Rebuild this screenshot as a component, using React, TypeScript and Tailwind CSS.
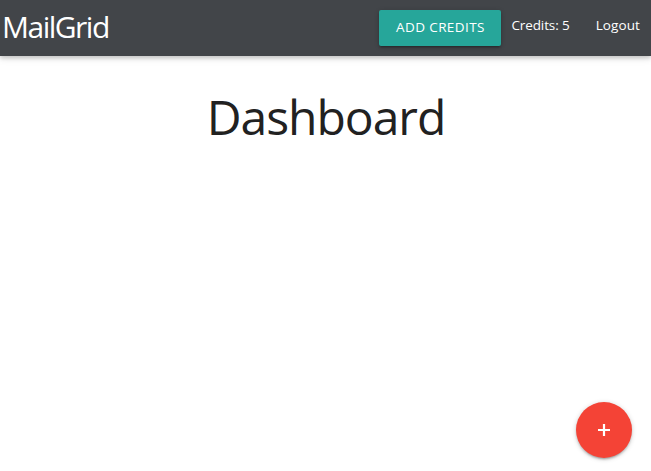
import React from "react"

function Navbar() {
  return (
    <nav className="relative z-10 flex h-[56px] items-center justify-between bg-[#424549] pl-[2px] pr-[11px] text-white shadow-[0_2px_4px_0_rgba(0,0,0,0.16),0_2px_8px_0_rgba(0,0,0,0.12)]">
      <a className="pb-[3px] text-[30px] leading-none tracking-[-1.5px]">MailGrid</a>
      <ul className="flex items-center">
        <li>
          <button className="h-[36px] w-[122px] rounded-[2px] bg-[#26a69a] pb-[1px] text-[13.5px] uppercase tracking-[0.4px] text-white shadow-[0_2px_2px_0_rgba(0,0,0,0.14),0_3px_1px_-2px_rgba(0,0,0,0.12),0_1px_5px_0_rgba(0,0,0,0.2)]">
            Add Credits
          </button>
        </li>
        <li className="mb-[5px] ml-[10px] text-[13.5px] tracking-[-0.1px]">Credits: 5</li>
        <li className="mb-[5px] ml-[26px] text-[13.5px] tracking-[0.1px]">Logout</li>
      </ul>
    </nav>
  )
}

function Fab() {
  return (
    <button className="fixed bottom-[13px] right-[19px] flex h-[56px] w-[56px] items-center justify-center rounded-full bg-[#f44336] text-white shadow-[0_2px_2px_0_rgba(0,0,0,0.14),0_3px_1px_-2px_rgba(0,0,0,0.12),0_1px_5px_0_rgba(0,0,0,0.2)]">
      <svg width="14" height="14" viewBox="0 0 14 14" fill="none">
        <path d="M7 1v12M1 7h12" stroke="white" strokeWidth="2.2" />
      </svg>
    </button>
  )
}

export default function App() {
  return (
    <div className="min-h-[471px] bg-white font-['Open_Sans',sans-serif] text-[#212121]">
      <Navbar />
      <main className="flex justify-center pt-[32px]">
        <h3 className="pl-[1px] text-[48px] font-normal leading-[1.2] tracking-[-1px]">Dashboard</h3>
      </main>
      <Fab />
    </div>
  )
}
